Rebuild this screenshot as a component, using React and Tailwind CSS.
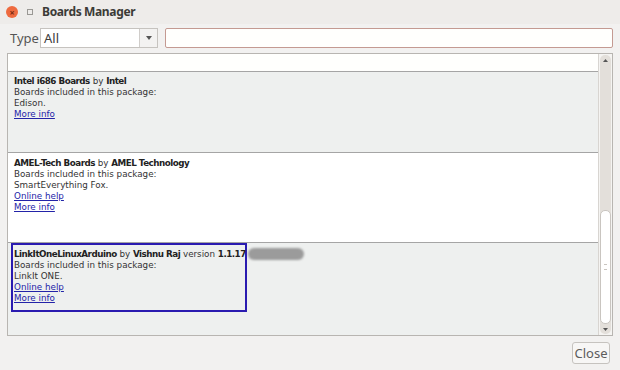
import React from "react";

const F = { fontFamily: '"DejaVu Sans", Verdana, sans-serif' };

function Link({ children }) {
  return <div className="text-[#2323a8] underline leading-[11px]">{children}</div>;
}

function B({ children }) {
  return <b className="text-[#222] tracking-[-0.5px]">{children}</b>;
}

function Row({ bg, h, children }) {
  return (
    <div className={`${bg} ${h} border-b border-[#a5a5a5] flex flex-col`}>
      {children}
    </div>
  );
}

export default function App() {
  return (
    <div className="w-[620px] h-[370px] bg-[#f2f1f0] flex flex-col overflow-hidden" style={{ fontFamily: '"Noto Sans", "Open Sans", sans-serif' }}>
      {/* title bar */}
      <div className="h-[24px] flex items-center bg-[#eeecea] shrink-0">
        <div className="ml-[6px] w-[12px] h-[12px] rounded-full bg-[#ee6a3f] flex items-center justify-center">
          <span className="text-[#7a2a10] text-[9px] leading-none font-bold">×</span>
        </div>
        <div className="ml-[9px] w-[6px] h-[6px] border border-[#9a9894]" />
        <div className="ml-[9px] text-[12px] font-bold text-[#3c3b37] tracking-[-0.35px]">Boards Manager</div>
      </div>
      {/* type row */}
      <div className="h-[20px] mt-[4px] flex items-center shrink-0">
        <div className="ml-[10px] w-[30px] text-[13px] text-[#555] leading-none">Type</div>
        <div className="w-[118px] h-[20px] border border-[#c6c3bf] bg-white flex">
          <div className="flex-1 text-[13px] text-[#3c3c3c] pl-[3px] leading-[18px]">All</div>
          <div className="w-[18px] border-l border-[#d0cdca] bg-[#f3f2f1] flex items-center justify-center">
            <svg width="6" height="4" viewBox="0 0 6 4"><path d="M0 0h6L3 4z" fill="#555" /></svg>
          </div>
        </div>
        <div className="ml-[7px] w-[448px] h-[20px] border border-[#c49a92] rounded-[2px] bg-[#fffffd]" />
      </div>
      {/* list */}
      <div className="mt-[5px] ml-[7px] w-[606px] h-[283px] border border-[#b8b5b1] bg-white flex shrink-0" style={F}>
        <div className="flex-1 flex flex-col text-[8.75px] text-[#333]">
          <div className="h-[18px] bg-[#fffffd] border-b border-[#a5a5a5]" />
          <Row bg="bg-[#eef0ef]" h="h-[81px]">
            <div className="pl-[6px] pt-[4px] leading-[11px]">
              <div><B>Intel i686 Boards</B> by <B>Intel</B></div>
              <div>Boards included in this package:</div>
              <div>Edison.</div>
              <Link>More info</Link>
            </div>
          </Row>
          <Row bg="bg-white" h="h-[90px]">
            <div className="pl-[6px] pt-[5px] leading-[11px]">
              <div><B>AMEL-Tech Boards</B> by <B>AMEL Technology</B></div>
              <div>Boards included in this package:</div>
              <div>SmartEverything Fox.</div>
              <Link>Online help</Link>
              <Link>More info</Link>
            </div>
          </Row>
          <div className="flex-1 bg-[#eef0ef] relative">
            <div className="absolute left-[3px] top-[0px] w-[236px] h-[69px] border-2 border-[#2a1bb0]" />
            <div className="pl-[6px] pt-[5px] leading-[11px] relative">
              <div className="flex items-center">
                <span><B>LinkItOneLinuxArduino</B> by <B>Vishnu Raj</B> version <B>1.1.17</B></span>
                <span className="ml-[2px] w-[56px] h-[12px] rounded-full bg-[#9b9b9b] blur-[1px]" />
              </div>
              <div>Boards included in this package:</div>
              <div>LinkIt ONE.</div>
              <Link>Online help</Link>
              <Link>More info</Link>
            </div>
          </div>
        </div>
        {/* scrollbar */}
        <div className="w-[14px] bg-[#f5f4f2] border-l border-[#d8d5d1] flex flex-col items-center py-[1px]">
          <div className="w-[11px] flex-1 rounded-[5px] bg-[#e3dfda] flex flex-col">
            <div className="h-[10px] flex items-center justify-center">
              <svg width="5" height="3" viewBox="0 0 5 3"><path d="M0 3h5L2.5 0z" fill="#555" /></svg>
            </div>
            <div className="flex-1" />
            <div className="h-[114px] rounded-[5px] bg-white border border-[#c9c5c0] flex items-center justify-center">
              <div className="w-[3px] h-[6px] border-y border-[#c9c5c0]" />
            </div>
            <div className="h-[10px] flex items-center justify-center">
              <svg width="5" height="3" viewBox="0 0 5 3"><path d="M0 0h5L2.5 3z" fill="#555" /></svg>
            </div>
          </div>
        </div>
      </div>
      {/* bottom */}
      <div className="flex justify-end pr-[10px] mt-[6px]">
        <div className="w-[38px] h-[22px] border border-[#c6c3bf] rounded-[3px] bg-[#f7f6f5] text-[13px] text-[#5c5c5c] flex items-center justify-center leading-none">Close</div>
      </div>
    </div>
  );
}
